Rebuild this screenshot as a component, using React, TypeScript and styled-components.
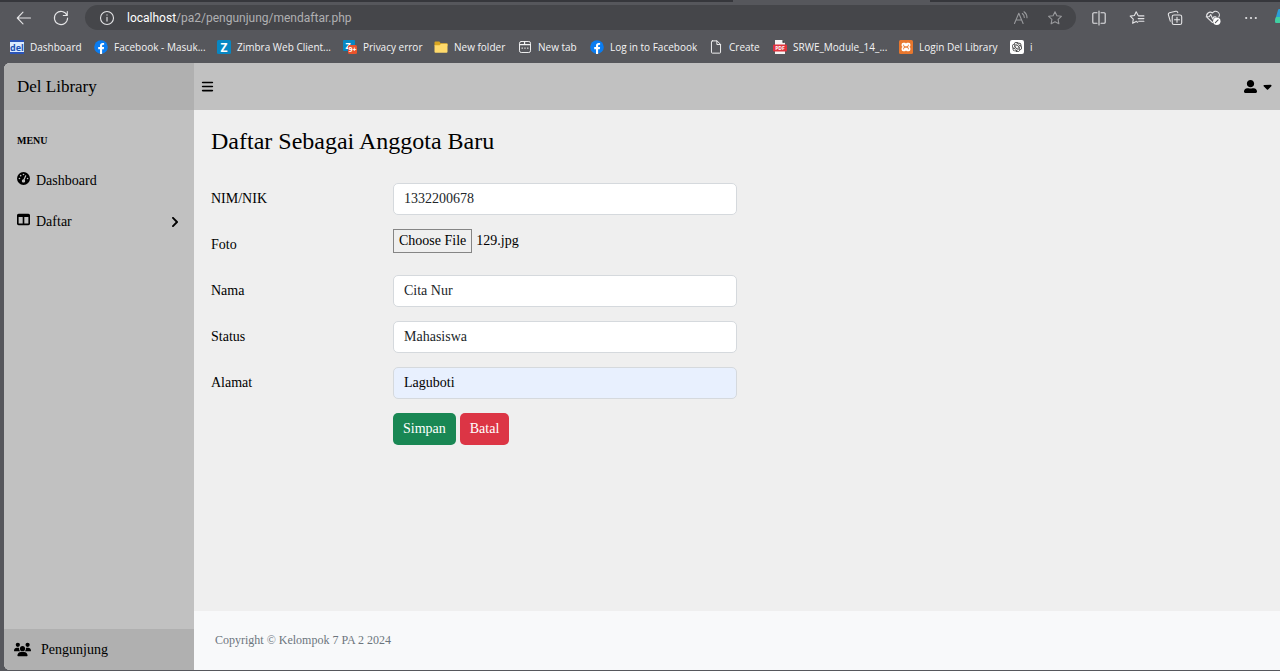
import React, { useRef, useState } from "react";
import styled, { createGlobalStyle } from "styled-components";
import { FaBars, FaCaretDown, FaGaugeHigh, FaTableColumns, FaUsers } from "react-icons/fa6";
import { FaChevronRight, FaUserAlt } from "react-icons/fa";
import { SiOpenai } from "react-icons/si";

const serif = `"Liberation Serif", "Times New Roman", serif`;
const sans = `"Open Sans", "Noto Sans", sans-serif`;

const GlobalStyle = createGlobalStyle`
  *, *::before, *::after { box-sizing: border-box; }
  body { margin: 0; background: #56575c; font-family: ${serif}; font-size: 14px; color: #000; }
  button, input { font: inherit; }
  a { color: inherit; text-decoration: none; }
`;

const Window = styled.div`
  display: flex;
  flex-direction: column;
  min-height: 100vh;
  overflow: hidden;
`;

/* Browser chrome */

const TabStrip = styled.div`
  display: grid;
  grid-template-columns: 733fr 197fr 350fr;
  height: 2px;
  background: #56575c;
`;

const InactiveTabs = styled.div`
  background: #36373c;
`;

const Toolbar = styled.div`
  display: flex;
  align-items: center;
  height: 31px;
  padding-left: 12px;
  color: #e4e4e6;
  font-family: ${sans};
`;

const ToolButton = styled.button<{ $width: number; $dim?: boolean }>`
  display: flex;
  flex: none;
  align-items: center;
  justify-content: center;
  width: ${(p) => p.$width}px;
  height: 24px;
  padding: 0;
  border: 0;
  background: none;
  color: ${(p) => (p.$dim ? "#98999c" : "#e4e4e6")};
`;

const AddressBar = styled.div`
  display: flex;
  flex: 1;
  align-items: center;
  min-width: 0;
  height: 25px;
  margin-right: 4px;
  padding: 0 4px 0 8px;
  border-radius: 13px;
  background: #45464a;
`;

const Url = styled.span`
  flex: 1;
  min-width: 0;
  overflow: hidden;
  padding-left: 6px;
  font-family: Roboto, sans-serif;
  font-size: 12px;
  line-height: 20px;
  white-space: nowrap;
  color: #b0b0b2;

  strong { font-weight: 400; color: #fff; }
`;

const Copilot = styled.button`
  flex: none;
  display: flex;
  width: 10px;
  height: 24px;
  padding: 3px 0 0 5px;
  border: 0;
  background: none;
  overflow: hidden;

  svg { flex: none; }
`;

const Bookmarks = styled.nav`
  display: flex;
  align-items: center;
  height: 30px;
  padding: 0 0 2px 10px;
  font-family: ${sans};
  font-size: 10px;
  color: #f4f4f5;
`;

const Bookmark = styled.a<{ $width: number }>`
  display: flex;
  flex: none;
  align-items: center;
  gap: 6px;
  width: ${(p) => p.$width}px;
  line-height: 16px;
  white-space: nowrap;

  svg { flex: none; }
`;

const OpenAiTile = styled.span`
  display: flex;
  padding: 2px;
  border-radius: 2px;
  background: #fff;
  color: #222;
`;

/* Page */

const Page = styled.div`
  display: grid;
  grid-template-columns: 190px minmax(0, 1fr);
  flex: 1;
  margin: 0 0 1px 4px;
  border-radius: 6px 0 0 6px;
  overflow: hidden;
  background: #efefef;
`;

const Sidebar = styled.aside`
  display: flex;
  flex-direction: column;
  background: #c1c1c1;
`;

const Brand = styled.a`
  display: flex;
  align-items: center;
  height: 47px;
  padding: 0 13px;
  background: #b0b0b0;
  font-size: 17px;
`;

const Menu = styled.nav`
  flex: 1;
  padding: 24px 13px 0;
`;

const MenuHeading = styled.h2`
  margin: 0 0 12px;
  font-size: 10px;
  line-height: 14px;
`;

const MenuLink = styled.a`
  display: flex;
  align-items: center;
  gap: 6px;
  height: 41px;

  span { flex: 1; }
  > svg:first-child { margin-bottom: 4px; }
`;

const SidebarFooter = styled.div`
  display: flex;
  align-items: center;
  gap: 10px;
  height: 41px;
  padding: 0 10px;
  background: #b0b0b0;
`;

const Content = styled.div`
  display: flex;
  flex-direction: column;
`;

const TopBar = styled.header`
  display: flex;
  align-items: center;
  justify-content: space-between;
  height: 47px;
  padding: 0 6px 0 7px;
  background: #c1c1c1;
`;

const BarButton = styled.button`
  display: flex;
  align-items: center;
  gap: 4px;
  padding: 0;
  border: 0;
  background: none;
  color: #000;
`;

const Main = styled.main`
  flex: 1;
  padding: 16px 17px;
`;

const Title = styled.h1`
  margin: 0 0 27px;
  font-size: 24px;
  font-weight: 400;
  line-height: 30px;
`;

const Form = styled.form`
  display: flex;
  flex-direction: column;
  gap: 14px;
`;

const FormRow = styled.div`
  display: grid;
  grid-template-columns: 182px minmax(0, 344px);
  align-items: center;
  min-height: 32px;
`;

const TextInput = styled.input<{ $filled?: boolean }>`
  width: 100%;
  height: 32px;
  padding: 0 10px;
  border: 1px solid #d5d9dd;
  border-radius: 5px;
  background: ${(p) => (p.$filled ? "#e8f0fe" : "#fff")};
  color: ${(p) => (p.$filled ? "#000" : "#212529")};
`;

const FilePicker = styled.div`
  display: flex;
  align-items: center;
  align-self: start;
  gap: 4px;
`;

const FileButton = styled.button`
  height: 24px;
  padding: 0 5px;
  border: 1px solid #858585;
  background: #efefef;
  color: #000;
`;

const Actions = styled.div`
  display: flex;
  grid-column: 2;
  gap: 4px;
`;

const ActionButton = styled.button<{ $color: string }>`
  height: 32px;
  padding: 0 10px;
  border: 0;
  border-radius: 5px;
  background: ${(p) => p.$color};
  color: #fff;
`;

const Footer = styled.footer`
  display: flex;
  align-items: center;
  height: 59px;
  padding: 0 21px;
  background: #f8f9fa;
  color: #6c757d;
  font-size: 12px;
`;

/* Icons */

const Line = ({ size = 16, children }: { size?: number; children: React.ReactNode }) => (
  <svg width={size} height={size} viewBox="0 0 16 16" fill="none" stroke="currentColor" strokeWidth="1.1" strokeLinecap="round" strokeLinejoin="round" aria-hidden="true">
    {children}
  </svg>
);

const Tile = ({ children }: { children: React.ReactNode }) => (
  <svg width="14" height="14" viewBox="0 0 14 14" aria-hidden="true">{children}</svg>
);

const BackIcon = () => <Line><path d="M14.5 8H1.5M7 2.2 1.3 8 7 13.8" /></Line>;
const ReloadIcon = () => <Line><path d="M14 5.2A6.6 6.6 0 1 0 14.6 8M14.3 1.5v4h-4" /></Line>;
const InfoIcon = () => <Line><circle cx="8" cy="8" r="6.5" /><path d="M8 7.3v3.8M8 4.9v.2" /></Line>;
const ReadAloudIcon = () => <Line><path d="M1.5 13.5 5.8 3.2l4.3 10.3M3 10h5.6M9.3 3.5q2 1.6 2 4M11 1.8q3 2.2 3 6" /></Line>;
const StarIcon = () => <Line><path d="m8 1.7 1.9 4 4.5.6-3.3 3.1.8 4.4L8 11.7l-3.9 2.1.8-4.4L1.6 6.3l4.5-.6z" /></Line>;
const SplitIcon = () => <Line><path d="M6 2.8H2.8a1 1 0 0 0-1 1v8.4a1 1 0 0 0 1 1H6M10 2.8h3.2a1 1 0 0 1 1 1v8.4a1 1 0 0 1-1 1H10M8 1v14" /></Line>;
const FavoritesIcon = () => <Line><path d="M9 5.2 7.2 1.8 5.4 5.5l-4.2.6 3.1 3-.7 4.2L7.2 11.4M7.2 11.4l1.5.9M9.7 5.9h5.2M9.2 8.6h5.7M9.7 11.3h5.2" /></Line>;
const CollectionsIcon = () => <Line><rect x="5.2" y="5" width="9.500" height="9.500" rx="1.8" /><path d="M10 7.3v5M7.5 9.8h5M3.3 11.2 1.4 4.8a1.6 1.6 0 0 1 1.1-2l6.3-1.5a1.7 1.7 0 0 1 2 1.3" /></Line>;
const HealthIcon = () => (
  <Line>
    <path d="M7.5 12.5 2 7.3A3.6 3.6 0 0 1 7.5 3 3.6 3.6 0 0 1 13.8 7M1.2 6.8h3l1.5-2.3 2 4.4 1.2-2h2" />
    <circle cx="11.8" cy="11.3" r="3.7" fill="#fff" stroke="none" />
    <path d="m10.4 12.6 2.700-2.700" stroke="#56575c" />
  </Line>
);
const MoreIcon = () => (
  <Line><g fill="currentColor" stroke="none"><circle cx="3.2" cy="8" r="1.1" /><circle cx="8" cy="8" r="1.1" /><circle cx="12.8" cy="8" r="1.1" /></g></Line>
);
const FacebookIcon = () => (
  <Tile>
    <circle cx="7" cy="7" r="6.8" fill="#0a7cf0" />
    <path d="M6 14V9.2H4.2V7.1H6V5.7c0-1.8 1-2.8 2.7-2.8l1.4.1v1.8H9.2c-.8 0-1.1.5-1.1 1.1v1.2h2l-.3 2.1H8.1V14z" fill="#fff" />
  </Tile>
);
const ZimbraIcon = () => (
  <Tile>
    <rect width="14" height="14" rx="1.5" fill="#0787c3" />
    <text x="7" y="11.5" textAnchor="middle" fontSize="12" fontWeight="700" fill="#fff">Z</text>
  </Tile>
);
const ZimbraBadgeIcon = () => (
  <Tile>
    <rect width="12" height="11" rx="1" fill="#0787c3" />
    <text x="5" y="9" textAnchor="middle" fontSize="9" fontWeight="700" fill="#fff">Z</text>
    <rect x="5" y="5" width="9" height="9" rx="1.5" fill="#e9532b" />
    <text x="9.5" y="12" textAnchor="middle" fontSize="7" fontWeight="700" fill="#fff">9+</text>
  </Tile>
);
const DelIcon = () => (
  <Tile>
    <rect width="14" height="14" fill="#2b54b8" />
    <rect y="2" width="14" height="10" fill="#dcecff" />
    <text x="7" y="11" textAnchor="middle" fontSize="9" fontWeight="700" fill="#1d55b5">del</text>
  </Tile>
);
const FolderIcon = () => (
  <Tile>
    <path d="M.5 2.5q0-1 1-1h3.800l1.400 1.700h5.800q1 0 1 1V6H.5z" fill="#d9a520" />
    <path d="M.5 5.200h5l1.600-1.500h6.400v8q0 1-1 1h-11q-1 0-1-1z" fill="#ffda6b" />
  </Tile>
);
const NewTabIcon = () => <Line size={14}><rect x="1.7" y="1.7" width="12.6" height="12.6" rx="2" /><path d="M2 5.2h12M7.5 2v3M4.6 9.2h.4M7.8 9.2h.4M11 9.2h.4" strokeWidth="1.4" /></Line>;
const PageIcon = () => <Line size={14}><path d="M3.8 1h5.4l4 4v9q0 1-1 1H3.8q-1 0-1-1V2q0-1 1-1zM9 1.2v4h4" /></Line>;
const PdfIcon = () => (
  <Tile>
    <path d="M2 0h7.5L12 2.7V14H2z" fill="#f4f4f4" />
    <path d="M9.5 0v2.7H12z" fill="#222" />
    <rect x="0" y="4.5" width="14" height="7" rx="1" fill="#e0323c" />
    <text x="7" y="10" textAnchor="middle" fontSize="5" fontWeight="700" fill="#fff">PDF</text>
  </Tile>
);
const XamppIcon = () => (
  <Tile>
    <rect width="14" height="14" rx="1.5" fill="#e8772e" />
    <path d="M4.200 2.800h1.600q1.200 0 1.200 1.200 0-1.200 1.200-1.200h1.600q1.600 0 1.600 1.600v1.200q0 1.400-1.400 1.400 1.400 0 1.400 1.400v1.200q0 1.600-1.600 1.600H8.200Q7 11.200 7 10q0 1.200-1.200 1.200H4.200q-1.600 0-1.600-1.600V8.400Q2.600 7 4 7 2.600 7 2.600 5.600V4.400q0-1.600 1.600-1.600z" fill="#fff" />
    <path d="M4.600 4.700v.5q0 1.800 1.800 1.800h1.200q1.800 0 1.800-1.800v-.5M4.600 9.300v-.5Q4.600 7 6.400 7h1.200q1.800 0 1.800 1.800v.5" fill="none" stroke="#e8772e" strokeWidth="1" />
  </Tile>
);

const bookmarks = [
  { label: "Dashboard", width: 84, icon: <DelIcon /> },
  { label: "Facebook - Masuk...", width: 123, icon: <FacebookIcon /> },
  { label: "Zimbra Web Client...", width: 126, icon: <ZimbraIcon /> },
  { label: "Privacy error", width: 91, icon: <ZimbraBadgeIcon /> },
  { label: "New folder", width: 84, icon: <FolderIcon /> },
  { label: "New tab", width: 72, icon: <NewTabIcon /> },
  { label: "Log in to Facebook", width: 119, icon: <FacebookIcon /> },
  { label: "Create", width: 64, icon: <PageIcon /> },
  { label: "SRWE_Module_14_...", width: 126, icon: <PdfIcon /> },
  { label: "Login Del Library", width: 111, icon: <XamppIcon /> },
  { label: "i", width: 24, icon: <OpenAiTile><SiOpenai size={10} /></OpenAiTile> },
];

const tools = [
  { label: "Split screen", icon: <SplitIcon /> },
  { label: "Favorites", icon: <FavoritesIcon /> },
  { label: "Collections", icon: <CollectionsIcon /> },
  { label: "Browser essentials", icon: <HealthIcon /> },
  { label: "Settings and more", icon: <MoreIcon /> },
];

function BrowserChrome() {
  return (
    <div>
      <TabStrip><InactiveTabs /><div /><InactiveTabs /></TabStrip>
      <Toolbar>
        <ToolButton $width={24} aria-label="Back"><BackIcon /></ToolButton>
        <ToolButton $width={49} aria-label="Refresh"><ReloadIcon /></ToolButton>
        <AddressBar>
          <ToolButton $width={28} aria-label="Site information"><InfoIcon /></ToolButton>
          <Url><strong>localhost</strong>/pa2/pengunjung/mendaftar.php</Url>
          <ToolButton $width={34} $dim aria-label="Read aloud"><ReadAloudIcon /></ToolButton>
          <ToolButton $width={34} $dim aria-label="Add to favorites"><StarIcon /></ToolButton>
        </AddressBar>
        {tools.map((t) => (
          <ToolButton key={t.label} $width={38} aria-label={t.label}>{t.icon}</ToolButton>
        ))}
        <Copilot aria-label="Copilot">
          <svg width="12" height="14" viewBox="0 0 12 14" aria-hidden="true">
            <path d="M4 0h8v14H1q-2-1 0-6l2-7q.4-1 1-1z" fill="#2a9ed8" />
            <path d="M1 8h11v6H1q-2-1 0-6z" fill="#41cfa0" />
          </svg>
        </Copilot>
      </Toolbar>
      <Bookmarks aria-label="Bookmarks">
        {bookmarks.map((b) => (
          <Bookmark key={b.label} href="#" $width={b.width}>{b.icon}{b.label}</Bookmark>
        ))}
      </Bookmarks>
    </div>
  );
}

function RegisterForm() {
  const fileInput = useRef<HTMLInputElement>(null);
  const [fileName, setFileName] = useState("129.jpg");
  return (
    <Form onSubmit={(e) => e.preventDefault()}>
      <FormRow>
        <label htmlFor="nim">NIM/NIK</label>
        <TextInput id="nim" defaultValue="1332200678" />
      </FormRow>
      <FormRow>
        <label htmlFor="foto">Foto</label>
        <FilePicker>
          <input ref={fileInput} id="foto" type="file" hidden onChange={(e) => setFileName(e.target.files?.[0]?.name ?? "")} />
          <FileButton type="button" onClick={() => fileInput.current?.click()}>Choose File</FileButton>
          <span>{fileName}</span>
        </FilePicker>
      </FormRow>
      <FormRow>
        <label htmlFor="nama">Nama</label>
        <TextInput id="nama" defaultValue="Cita Nur" />
      </FormRow>
      <FormRow>
        <label htmlFor="status">Status</label>
        <TextInput id="status" defaultValue="Mahasiswa" />
      </FormRow>
      <FormRow>
        <label htmlFor="alamat">Alamat</label>
        <TextInput id="alamat" defaultValue="Laguboti" $filled />
      </FormRow>
      <FormRow>
        <Actions>
          <ActionButton type="submit" $color="#198754">Simpan</ActionButton>
          <ActionButton type="reset" $color="#dc3545">Batal</ActionButton>
        </Actions>
      </FormRow>
    </Form>
  );
}

export default function App() {
  return (
    <Window>
      <GlobalStyle />
      <BrowserChrome />
      <Page>
        <Sidebar>
          <Brand href="#">Del Library</Brand>
          <Menu>
            <MenuHeading>MENU</MenuHeading>
            <MenuLink href="#"><FaGaugeHigh size={13} /><span>Dashboard</span></MenuLink>
            <MenuLink href="#"><FaTableColumns size={13} /><span>Daftar</span><FaChevronRight size={12} /></MenuLink>
          </Menu>
          <SidebarFooter><FaUsers size={17} />Pengunjung</SidebarFooter>
        </Sidebar>
        <Content>
          <TopBar>
            <BarButton aria-label="Toggle menu"><FaBars size={13} /></BarButton>
            <BarButton aria-label="Account"><FaUserAlt size={13} /><FaCaretDown size={13} /></BarButton>
          </TopBar>
          <Main>
            <Title>Daftar Sebagai Anggota Baru</Title>
            <RegisterForm />
          </Main>
          <Footer>Copyright © Kelompok 7 PA 2 2024</Footer>
        </Content>
      </Page>
    </Window>
  );
}
